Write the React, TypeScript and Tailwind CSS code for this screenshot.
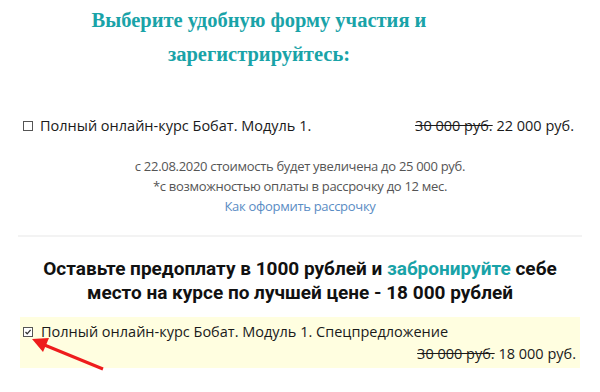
import React from 'react';

const Box = ({ checked }: { checked?: boolean }) => (
  <span className="inline-flex w-[10px] h-[10px] shrink-0 border border-[#555] bg-white items-center justify-center">
    {checked && (
      <svg width="8" height="8" viewBox="0 0 8 8">
        <path d="M1.5 4 L3.2 5.8 L6.6 1.8" fill="none" stroke="#333" strokeWidth="1.3" />
      </svg>
    )}
  </span>
);

export default function App() {
  return (
    <div className="relative w-[600px] h-[392px] bg-white overflow-hidden font-['Open_Sans',sans-serif] text-[#1a1a1a]">
      {/* Title */}
      <h1 className="w-[518px] pt-[3px] text-center text-[20.5px] leading-[34px] font-bold text-[#19a3a8] font-['Liberation_Serif',serif]">
        Выберите удобную форму участия и<br />зарегистрируйтесь:
      </h1>

      {/* Regular offer */}
      <div className="mt-[45px] px-[23px]">
        <div className="flex items-center justify-between text-[14.5px] leading-[20px]">
          <div className="flex items-center gap-[7px]">
            <Box />
            <span>Полный онлайн-курс Бобат. Модуль 1.</span>
          </div>
          <div className="pr-[3px]">
            <s>30 000 руб.</s> 22 000 руб.
          </div>
        </div>
        <div className="mt-[20px] text-center text-[13px] leading-[20px] text-[#555] tracking-[-0.3px]">
          <p>с 22.08.2020 стоимость будет увеличена до 25 000 руб.</p>
          <p>*с возможностью оплаты в рассрочку до 12 мес.</p>
          <p className="text-[#5a8cc4]">Как оформить рассрочку</p>
        </div>
      </div>

      <div className="mx-[18px] mt-[19px] h-[2px] bg-[#f3f3f3]" />

      {/* Prepayment */}
      <h2 className="mt-[20px] px-[40px] text-center text-[19px] leading-[24px] font-bold text-[#111] font-['Roboto',sans-serif]">
        Оставьте предоплату в 1000 рублей и <span className="text-[#19a3a8]">забронируйте</span> себе место на курсе по лучшей цене - 18 000 рублей
      </h2>

      <div className="mx-[20px] mt-[12px] bg-[#fffee0] px-[3px] pt-[4px] pb-[3px] text-[14.5px] leading-[22px]">
        <div className="flex items-center gap-[8px]">
          <Box checked />
          <span>Полный онлайн-курс Бобат. Модуль 1. Спецпредложение</span>
        </div>
        <div className="text-right pr-[1px]">
          <s>30 000 руб.</s> 18 000 руб.
        </div>
      </div>

      {/* Red arrow pointer */}
      <svg className="absolute left-0 top-0 pointer-events-none" width="600" height="392">
        <line x1="103" y1="369" x2="42" y2="344" stroke="#ee1c1c" strokeWidth="3" />
        <polygon points="32,339 49,338 43,352" fill="#ee1c1c" />
      </svg>
    </div>
  );
}
